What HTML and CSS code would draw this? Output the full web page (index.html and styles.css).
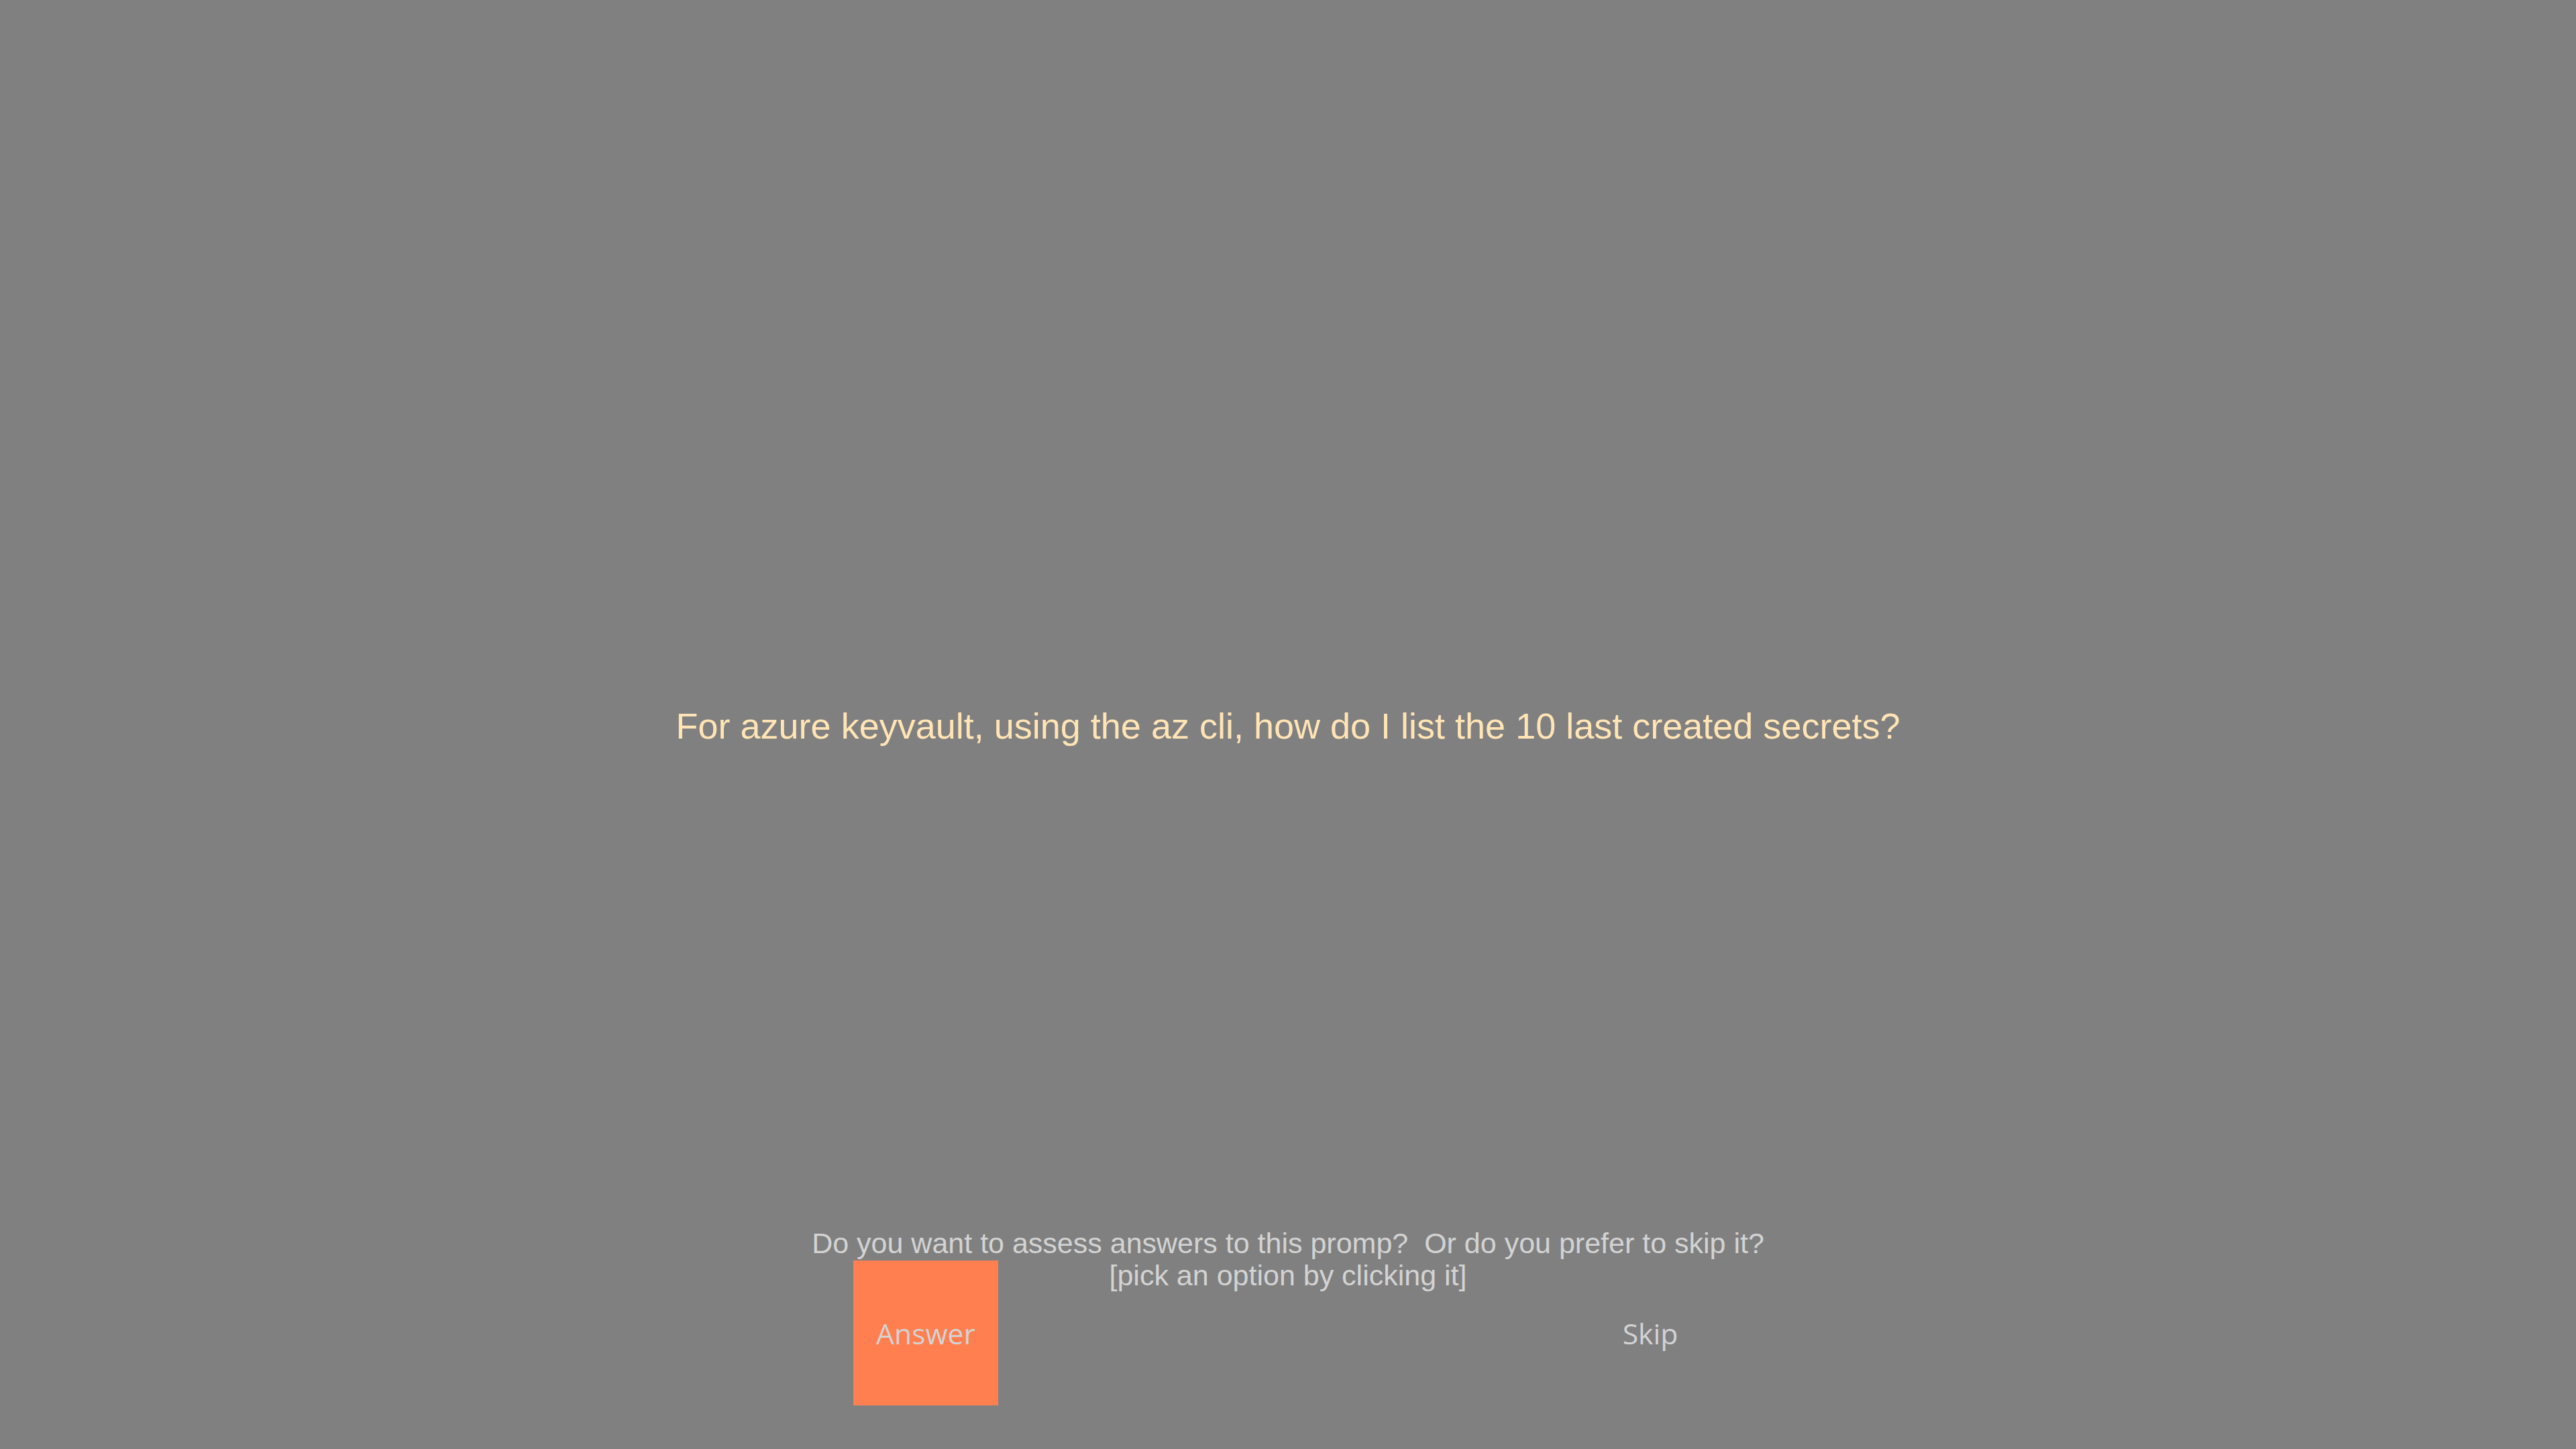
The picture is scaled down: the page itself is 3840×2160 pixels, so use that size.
FILE: index.html
```html
<!DOCTYPE html>
<html lang="en">
<head>
<meta charset="utf-8">
<title>Prompt assessment</title>
<link rel="stylesheet" href="styles.css">
</head>
<body>
<main class="page">
  <section class="question">
    <p class="question-text">For azure keyvault, using the az cli, how do I list the 10 last created secrets?</p>
  </section>
  <section class="prompt">
    <p class="prompt-text">Do you want to assess answers to this promp?&nbsp; Or do you prefer to skip it?<br>[pick an option by clicking it]</p>
  </section>
  <div class="choices">
    <button class="choice choice-answer" type="button">Answer</button>
    <button class="choice choice-skip" type="button">Skip</button>
  </div>
</main>
</body>
</html>
```
FILE: styles.css
```css
html, body {
  margin: 0;
  padding: 0;
  background: #808080;
}

.page {
  width: 3840px;
  height: 2160px;
  display: flex;
  flex-direction: column;
  overflow: hidden;
}

.question {
  padding-top: 1051px;
}

.question-text {
  margin: 0;
  text-align: center;
  font-family: "Liberation Sans", Arial, sans-serif;
  font-size: 54px;
  line-height: 62px;
  color: #ffe4b5;
}

.prompt {
  margin-top: 716px;
}

.prompt-text {
  margin: 0;
  text-align: center;
  font-family: "Liberation Sans", Arial, sans-serif;
  font-size: 43px;
  line-height: 48px;
  color: #d3d3d3;
}

.choices {
  width: 2160px;
  margin: -46px auto 0;
  display: grid;
  grid-template-columns: 1fr 1fr;
  justify-items: center;
}

.choice {
  width: 216px;
  height: 216px;
  padding: 0;
  border: none;
  display: flex;
  align-items: center;
  justify-content: center;
  font-family: "Open Sans", sans-serif;
  font-size: 42.67px;
  color: #d3d3d3;
  background: transparent;
  cursor: pointer;
}

.choice-answer {
  background: #ff7f50;
}
```
